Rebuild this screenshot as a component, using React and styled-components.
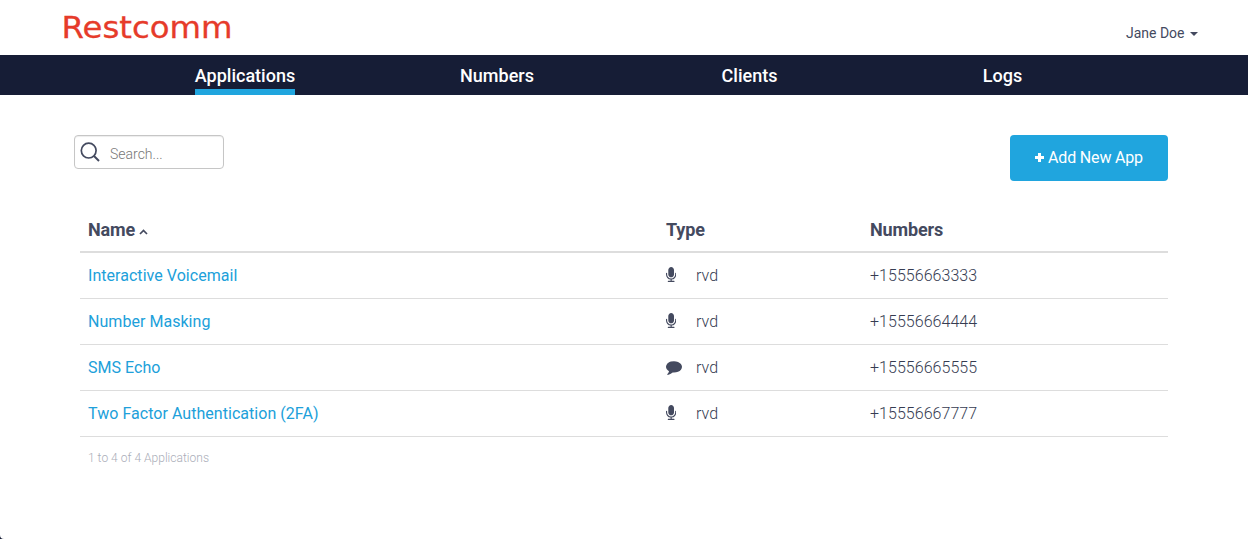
import React from 'react';
import styled, { createGlobalStyle } from 'styled-components';

const Global = createGlobalStyle`
  * { box-sizing: border-box; }
  body {
    margin: 0;
    background: #fff;
    color: #444a5f;
    font-family: Roboto, "Liberation Sans", sans-serif;
    font-size: 16px;
    font-weight: 300;
  }
`;

const Page = styled.div`
  position: relative;
  height: 539px;
  overflow: hidden;
`;
const Header = styled.header`
  height: 55px;
  display: flex;
  justify-content: space-between;
  padding: 0 50px 0 62px;
`;
const Logo = styled.svg`
  display: block;
  width: 172px;
  height: 55px;
  overflow: visible;
`;
const UserMenu = styled.button`
  display: flex;
  align-items: center;
  gap: 5.5px;
  height: 20px;
  margin-top: 23px;
  padding: 0;
  border: 0;
  background: none;
  color: #444a5f;
  font: 400 14px/20px Roboto, sans-serif;
`;
const Caret = styled.span`
  margin-top: 1px;
  border-top: 4px solid #444a5f;
  border-left: 4px solid transparent;
  border-right: 4px solid transparent;
`;
const Nav = styled.nav`
  height: 40px;
  background: #161d36;
  display: grid;
  grid-template-columns: 252px 252px 253px 253px;
  justify-content: center;
  justify-items: center;
`;
const Tab = styled.a`
  height: 40px;
  border-bottom: 6px solid ${(p) => (p.$active ? '#20a5de' : 'transparent')};
  color: #fff;
  font-weight: 500;
  font-size: 18px;
  line-height: 41px;
  white-space: nowrap;
`;
const Toolbar = styled.div`
  display: flex;
  justify-content: space-between;
  align-items: flex-start;
  padding: 40px 80px 0 74px;
`;
const SearchBox = styled.label`
  display: flex;
  align-items: center;
  width: 150px;
  height: 34px;
  padding-left: 5px;
  border: 1px solid #c6c6c6;
  border-radius: 4px;
  box-shadow: inset 0 1px 1px rgba(0, 0, 0, 0.075);
`;
const SearchInput = styled.input`
  width: 100px;
  margin: 3px 0 0 9px;
  padding: 0;
  border: 0;
  outline: 0;
  background: none;
  font: 300 14px/20px Roboto, sans-serif;
  &::placeholder { color: #777; opacity: 1; }
`;
const AddButton = styled.button`
  display: flex;
  align-items: center;
  justify-content: center;
  gap: 4px;
  width: 158px;
  height: 46px;
  padding: 0;
  border: 0;
  border-radius: 4px;
  background: #20a5de;
  color: #fff;
  font: 400 16px/20px Roboto, sans-serif;
  letter-spacing: -0.17px;
`;
const PlusIcon = styled.svg`
  margin-top: -1px;
`;
const Table = styled.table`
  width: 1088px;
  margin: 26px 0 0 80px;
  border-collapse: separate;
  border-spacing: 0;
  table-layout: fixed;
`;
const Th = styled.th`
  width: ${(p) => p.$width};
  height: 46px;
  padding: 2px 8px 0;
  border-bottom: 2px solid #ddd;
  text-align: left;
  font-size: 18px;
  font-weight: 700;
  line-height: 24px;
  letter-spacing: -0.15px;
`;
const Td = styled.td`
  height: 46px;
  padding: 0 8px;
  border-bottom: 1px solid #ddd;
  color: #363c52;
  line-height: 24px;
  letter-spacing: 0.04px;
`;
const AppLink = styled.a`
  color: #20a0da;
  font-weight: 400;
`;
const TypeCell = styled.span`
  display: flex;
  align-items: center;
`;
const IconSlot = styled.span`
  display: flex;
  width: 30px;
  padding-bottom: ${(p) => p.$lift || '0'};
`;
const Glyph = styled.svg`
  fill: #444a5f;
`;
const SortIcon = styled.svg`
  margin-left: 4px;
  vertical-align: 1px;
`;
const Summary = styled.p`
  margin: 12px 0 0 88px;
  color: #aaadb8;
  font-size: 12px;
  line-height: 18px;
  letter-spacing: 0.02px;
`;
const Corner = styled.svg`
  position: absolute;
  left: 0;
  bottom: 0;
`;

const SearchIcon = () => (
  <svg width="21" height="21" viewBox="0 0 21 21" fill="none" stroke="#444a5f">
    <circle cx="8.700" cy="8.600" r="7.400" strokeWidth="1.700" />
    <path d="M14 14l5 5" strokeWidth="2" />
  </svg>
);
const MicIcon = () => (
  <IconSlot $lift="2px">
    <Glyph width="10.3" height="15" viewBox="64 0 1152 1664">
      <path d="M1216 704v128q0 221-147.500 384.500t-364.500 187.500v132h256q26 0 45 19t19 45-19 45-45 19h-640q-26 0-45-19t-19-45 19-45 45-19h256v-132q-217-24-364.500-187.500t-147.500-384.500v-128q0-26 19-45t45-19 45 19 19 45v128q0 185 131.500 316.500t316.500 131.500 316.500-131.500 131.500-316.500v-128q0-26 19-45t45-19 45 19 19 45zm-256-384v512q0 132-94 226t-226 94-226-94-94-226v-512q0-132 94-226t226-94 226 94 94 226z" />
    </Glyph>
  </IconSlot>
);
const CommentIcon = () => (
  <IconSlot>
    <Glyph width="16" height="14" viewBox="0 256 1792 1536">
      <path d="M1792 896q0 174-120 321.500t-326 233-450 85.500q-70 0-145-8-198 175-460 242-49 14-114 22-17 2-30.500-9t-17.500-29v-1q-3-4-.5-12t2-10 4.500-9.500l6-9 7-8.500 8-9q7-8 31-34.500t34.500-38 31-39.500 32.500-51 27-59 26-76q-157-89-247.500-220t-90.500-281q0-130 71-248.500t191-204.500 286-136.500 348-50.500q244 0 450 85.500t326 233 120 321.500z" />
    </Glyph>
  </IconSlot>
);

const tabs = ['Applications', 'Numbers', 'Clients', 'Logs'];
const apps = [
  { name: 'Interactive Voicemail', icon: MicIcon, number: '+15556663333' },
  { name: 'Number Masking', icon: MicIcon, number: '+15556664444' },
  { name: 'SMS Echo', icon: CommentIcon, number: '+15556665555' },
  { name: 'Two Factor Authentication (2FA)', icon: MicIcon, number: '+15556667777' },
];

export default function App() {
  return (
    <Page>
      <Global />
      <Header>
        <Logo viewBox="0 0 172 55">
          <text x="-0.500" y="38" textLength="171" lengthAdjust="spacingAndGlyphs" fill="#e63b2a" stroke="#e63b2a" strokeWidth="0.300" fontFamily="'DejaVu Sans', sans-serif" fontSize="30" fontWeight="400">Restcomm</text>
        </Logo>
        <UserMenu>Jane Doe<Caret /></UserMenu>
      </Header>
      <Nav>
        {tabs.map((t, i) => <Tab key={t} $active={i === 0}>{t}</Tab>)}
      </Nav>
      <Toolbar>
        <SearchBox>
          <SearchIcon />
          <SearchInput placeholder="Search..." />
        </SearchBox>
        <AddButton>
          <PlusIcon width="9" height="9" viewBox="0 0 9 9"><path d="M4.500 0v9M0 4.500h9" stroke="#fff" strokeWidth="3" /></PlusIcon>
          Add New App
        </AddButton>
      </Toolbar>
      <Table>
        <thead>
          <tr>
            <Th $width="578px">
              Name
              <SortIcon width="9" height="6" viewBox="0 0 9 6" fill="none"><path d="M1 5l3.500-3.500L8 5" stroke="#444a5f" strokeWidth="1.700" /></SortIcon>
            </Th>
            <Th $width="204px">Type</Th>
            <Th>Numbers</Th>
          </tr>
        </thead>
        <tbody>
          {apps.map(({ name, icon: Icon, number }) => (
            <tr key={name}>
              <Td><AppLink>{name}</AppLink></Td>
              <Td><TypeCell><Icon />rvd</TypeCell></Td>
              <Td>{number}</Td>
            </tr>
          ))}
        </tbody>
      </Table>
      <Summary>1 to 4 of 4 Applications</Summary>
      <Corner width="4" height="4" viewBox="0 0 4 4"><path d="M0 0Q0 4 4 4H0Z" fill="#161d36" /></Corner>
    </Page>
  );
}
